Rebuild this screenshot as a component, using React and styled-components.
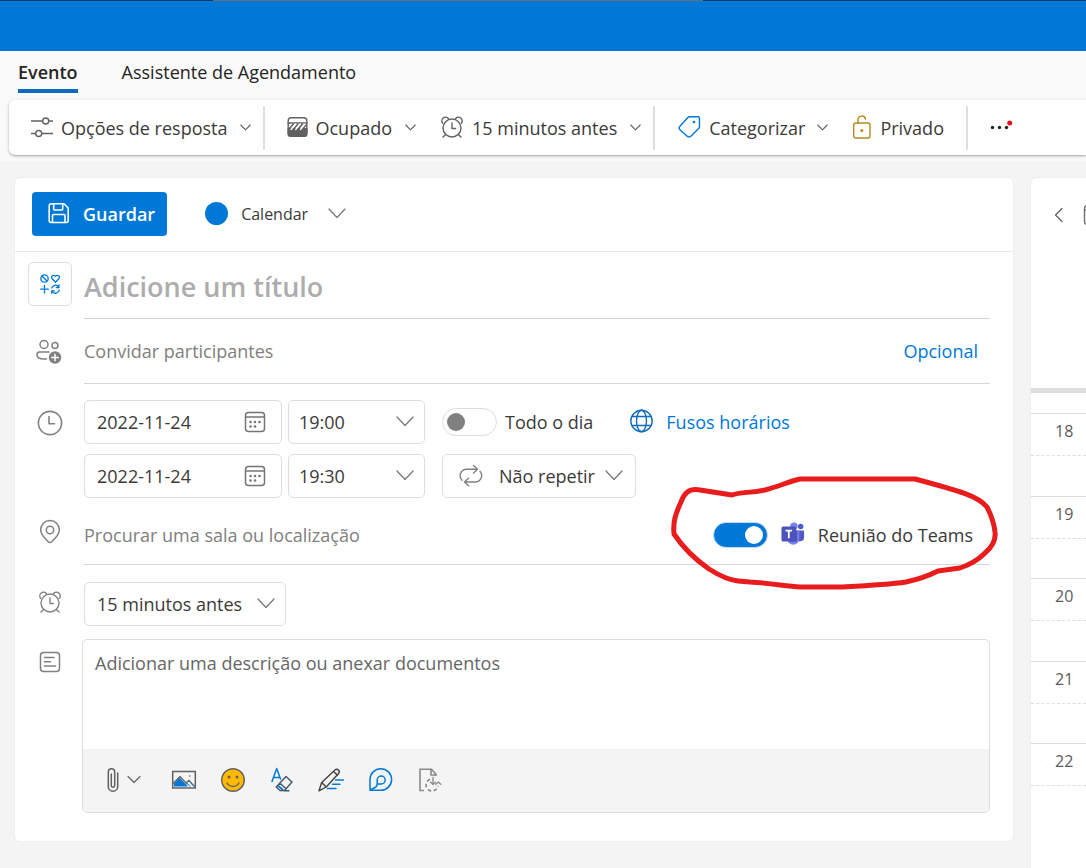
import { useState } from "react";
import styled, { createGlobalStyle } from "styled-components";

const GlobalStyle = createGlobalStyle`
  * {
    box-sizing: border-box;
  }

  body {
    margin: 0;
    background-color: #f4f4f4;
    color: #3b3a39;
    font-family: "Open Sans", "Noto Sans", sans-serif;
    font-size: 18px;
    line-height: 24px;
  }

  button,
  input,
  select,
  textarea {
    font: inherit;
    color: inherit;
    background: none;
    border: none;
    border-radius: 0;
    outline: none;
    padding: 0;
    margin: 0;
  }

  button,
  select {
    cursor: pointer;
  }

  svg {
    flex: none;
  }
`;

const Page = styled.div`
  height: 100vh;
  overflow: hidden;
  display: flex;
  flex-direction: column;
`;

const TopBar = styled.header`
  flex: none;
  height: 51px;
  background-color: #0078d7;
`;

const WindowEdge = styled.div`
  height: 1px;
  background: linear-gradient(to right, #0b3a66 213px, #5f6f7c 213px, #5f6f7c 703px, #0b3a66 703px);
`;

const Ribbon = styled.div`
  flex: none;
  background-color: #fafafa;
  padding: 0 0 6px 9px;
`;

const Tabs = styled.nav`
  display: flex;
  gap: 44px;
  height: 49px;
  padding: 0 9px;
`;

const Tab = styled.button`
  height: 42px;
  display: flex;
  align-items: center;
  padding-top: 4px;
  color: #252423;
  font-weight: ${(props) => (props.$active ? 600 : 400)};
  border-bottom: 4px solid ${(props) => (props.$active ? "#0f6cbd" : "transparent")};
`;

const Toolbar = styled.div`
  display: flex;
  align-items: center;
  height: 55px;
  background-color: #fff;
  border-radius: 6px 0 0 6px;
  box-shadow: 0 1px 2px rgba(0, 0, 0, 0.28), 0 1px 5px rgba(0, 0, 0, 0.1);
`;

const ToolGroup = styled.div`
  display: flex;
  align-items: center;
  gap: 24px;
  height: 44px;
  padding: 0 ${(props) => (props.$wide ? "22px" : "12px")} 0 22px;
  border-right: ${(props) => (props.$last ? "none" : "2px solid #e1dfdd")};
`;

const ToolButton = styled.button`
  display: flex;
  align-items: center;
  gap: 8px;
  white-space: nowrap;

  > svg + svg {
    margin-left: 4px;
  }
`;

const ToolLabel = styled.label`
  display: flex;
  align-items: center;
  gap: 8px;
`;

// the chevron shares the grid cell of the select it belongs to
const SelectShell = styled.span`
  display: grid;
  align-items: center;
  height: ${(props) => (props.$boxed ? "44px" : "auto")};
  width: ${(props) => props.$width || "auto"};
  border: ${(props) => (props.$boxed ? "1px solid #dedede" : "none")};
  border-radius: 5px;

  > * {
    grid-area: 1 / 1;
  }

  > svg {
    justify-self: end;
    margin-right: ${(props) => (props.$boxed ? "10px" : "0")};
    pointer-events: none;
  }
`;

const Select = styled.select`
  appearance: none;
  width: 100%;
  height: 100%;
  field-sizing: content;
  padding: ${(props) => props.$padding || "0 24px 0 0"};
  font-size: ${(props) => props.$size || "18px"};
`;

const MoreButton = styled.button`
  display: flex;
  align-items: center;
`;

const Workspace = styled.main`
  flex: 1;
  min-height: 0;
  display: grid;
  grid-template-columns: minmax(0, 1fr) 56px;
  align-items: start;
  gap: 16px;
  padding: 16px 0 0 14px;
`;

const Card = styled.form`
  background-color: #fff;
  border: 1px solid #eeeeee;
  border-radius: 6px;
  padding-bottom: 28px;
`;

const CardHeader = styled.div`
  display: flex;
  align-items: center;
  gap: 38px;
  height: 74px;
  padding: 0 0 2px 17px;
  border-bottom: 1px solid #ebebeb;
`;

const SaveButton = styled.button`
  display: flex;
  align-items: center;
  gap: 13px;
  height: 44px;
  padding: 0 12px 0 16px;
  border-radius: 4px;
  background-color: #0078d7;
  color: #fff;
  font-weight: 600;
`;

const CalendarPicker = styled.label`
  display: flex;
  align-items: center;
  gap: 13px;
`;

const CalendarDot = styled.span`
  width: 23px;
  height: 23px;
  border-radius: 50%;
  background-color: #0078d7;
`;

const Fields = styled.div`
  padding: 0 23px 0 13px;
`;

const Row = styled.div`
  display: grid;
  grid-template-columns: 44px minmax(0, 1fr);
  column-gap: ${(props) => (props.$tight ? "10px" : "12px")};
  padding-top: ${(props) => props.$top || "0"};
`;

const IconCell = styled.label`
  display: flex;
  align-items: center;
  justify-content: center;
  height: ${(props) => props.$height || "auto"};
`;

const CharmButton = styled.button`
  display: flex;
  align-items: center;
  justify-content: center;
  width: 44px;
  height: 44px;
  margin-top: 10px;
  border: 1px solid #dedede;
  border-radius: 5px;
`;

const Underlined = styled.div`
  position: relative;
  display: flex;
  align-items: center;
  height: ${(props) => props.$height};
  padding-top: ${(props) => props.$top || "0"};
  border-bottom: 1px solid #d6d6d6;
`;

const TextInput = styled.input`
  flex: 1;
  min-width: 0;
  height: 100%;

  &::placeholder {
    color: #808080;
    opacity: 1;
  }
`;

const TitleInput = styled(TextInput)`
  font-size: 27px;
  font-weight: 600;

  &::placeholder {
    color: #adadad;
  }
`;

const LinkButton = styled.button`
  display: flex;
  align-items: center;
  gap: 13px;
  color: #0078d7;
  margin-right: ${(props) => (props.$end ? "12px" : "0")};
`;

const When = styled.div`
  display: flex;
  flex-direction: column;
  gap: 10px;
`;

const WhenLine = styled.div`
  display: flex;
  align-items: center;
  gap: 6px;
`;

const DateBox = styled.label`
  display: flex;
  align-items: center;
  width: 198px;
  height: 44px;
  padding: 0 15px 0 12px;
  border: 1px solid #dedede;
  border-radius: 5px;
`;

const WhenExtra = styled.div`
  display: flex;
  align-items: center;
  gap: 37px;
  padding-left: 11px;
`;

const ToggleLabel = styled.label`
  display: flex;
  align-items: center;
  gap: ${(props) => props.$gap || "8px"};
  white-space: nowrap;
`;

const Toggle = styled.input`
  appearance: none;
  flex: none;
  display: flex;
  align-items: center;
  width: 55px;
  height: 28px;
  padding: 0 4px;
  border: 1px solid #dedede;
  border-radius: 14px;
  cursor: pointer;

  &::before {
    content: "";
    width: 18px;
    height: 18px;
    border-radius: 50%;
    background-color: #808080;
  }

  &:checked {
    height: 26px;
    justify-content: flex-end;
    border-color: #c8ddef;
    background-color: #0078d7;
  }

  &:checked::before {
    background-color: #fff;
  }
`;

const RepeatBox = styled.label`
  display: flex;
  align-items: center;
  gap: 16px;
  width: 194px;
  height: 44px;
  padding-left: 16px;
  border: 1px solid #dedede;
  border-radius: 5px;
`;

const TeamsSlot = styled.div`
  position: relative;
  padding-right: 17px;
`;

// hand drawn ring that lies over the Teams switch
const Ring = styled.svg`
  position: absolute;
  top: -52px;
  right: -20px;
  pointer-events: none;
`;

const Editor = styled.div`
  border: 1px solid #dedede;
  border-radius: 5px;
  overflow: hidden;
`;

const Description = styled.textarea`
  display: block;
  width: 100%;
  height: 109px;
  padding: 11px 12px;
  resize: none;

  &::placeholder {
    color: #666666;
    opacity: 1;
  }
`;

const EditorTools = styled.div`
  display: flex;
  align-items: center;
  gap: 23px;
  height: 63px;
  padding: 0 23px 2px;
  background-color: #f4f4f4;
`;

const EditorButton = styled.button`
  display: flex;
  align-items: center;
  gap: 7px;
  margin-right: ${(props) => (props.$wide ? "7px" : "0")};
`;

const DayPanel = styled.aside`
  height: 720px;
  background-color: #fff;
  border: 1px solid #eeeeee;
  border-right: none;
  border-radius: 6px 0 0 0;
  overflow: hidden;
`;

const DayHeader = styled.div`
  display: flex;
  align-items: center;
  gap: 18px;
  height: 73px;
  padding-left: 23px;
`;

const AllDayStrip = styled.div`
  height: 142px;
  border-bottom: 5px solid #dedede;
  margin-bottom: 20px;
`;

const Hour = styled.div`
  height: 83px;
  border-top: 1px solid #dedede;
  font-size: 16px;
  color: #5c5c5c;

  &:nth-child(even) {
    height: 82px;
  }
`;

const HourLabel = styled.div`
  height: 42px;
  padding: 5px 0 0 24px;
  border-bottom: 1px dashed #dedede;
`;

const Icon = ({ width = 24, height = 24, color = "#616161", stroke = 1.4, children }) => (
    <svg
        width={width}
        height={height}
        viewBox={`0 0 ${width} ${height}`}
        fill="none"
        stroke={color}
        strokeWidth={stroke}
        strokeLinecap="round"
        strokeLinejoin="round"
        aria-hidden="true"
    >
        {children}
    </svg>
);

const Chevron = ({ small }) =>
    small ? (
        <Icon width={11} height={12} stroke={1.1}>
            <path d="M.8 3l4.7 4.8L10.2 3" />
        </Icon>
    ) : (
        <Icon width={18} height={14} stroke={1.2} color="#757575">
            <path d="M1 2l8 8.5L17 2" />
        </Icon>
    );

const SlidersIcon = () => (
    <Icon height={28} width={22}>
        <path d="M0 7h11.5M18 7h4M0 19.500h4.500M11 19.500h11" />
        <circle cx="14.700" cy="7" r="3" />
        <circle cx="7.700" cy="19.500" r="3" />
    </Icon>
);

const BusyIcon = () => (
    <Icon width={21} height={26}>
        <path d="M.5 13h20v6a3 3 0 0 1-3 3h-14a3 3 0 0 1-3-3z" fill="#616161" stroke="none" />
        <rect x="1.200" y="2.700" width="18.600" height="18.600" rx="3" />
        <path d="M1 8h19" />
        <path d="M2 14L6.500 9M6.500 14L11 9M11 14l4.500-5M15.500 14L19.500 9.500" stroke="#616161" strokeWidth="1.800" strokeLinecap="butt" />
        <path d="M4 14.500L8.700 9M8.700 14.500L13.200 9M13.500 14.500L18 9" stroke="#fff" strokeWidth="1.300" />
    </Icon>
);

const AlarmIcon = ({ color = "#616161", height = 24 }) => (
    <Icon width={24} height={height} color={color}>
        <circle cx="12" cy="13" r="9" />
        <path d="M12 8v5.500h3.500M5.700 19.500L3 22M18.300 19.500L21 22" />
        <path d="M2.600 8.300A3.700 3.700 0 1 1 8.500 3.700M21.400 8.300A3.700 3.700 0 1 0 15.500 3.700" />
    </Icon>
);

const TagIcon = () => (
    <Icon width={24} height={26} color="#0078d7">
        <path d="M13 1.700h8a1.500 1.500 0 0 1 1.500 1.500v8.300a3 3 0 0 1-.9 2.100l-7.400 7.500a3 3 0 0 1-4.300 0l-7.200-6.700a2 2 0 0 1 0-2.900l8.200-9a3 3 0 0 1 2.100-.8z" />
        <circle cx="17" cy="7" r="1.300" fill="#0078d7" stroke="none" />
    </Icon>
);

const UnlockIcon = () => (
    <Icon width={20} height={26} color="#b58a1b">
        <rect x="1.700" y="8" width="16.300" height="15" rx="2" />
        <path d="M6 8V5a3.800 3.800 0 0 1 7.500-1" />
        <circle cx="9.800" cy="15.500" r="1.500" fill="#b58a1b" stroke="none" />
    </Icon>
);

const MoreIcon = () => (
    <Icon width={24} height={26} stroke={0}>
        <g fill="#252423">
            <circle cx="2.500" cy="12.500" r="1.700" />
            <circle cx="9.500" cy="12.500" r="1.700" />
            <circle cx="16.500" cy="12.500" r="1.700" />
        </g>
        <circle cx="19.700" cy="8" r="2.500" fill="#e81123" />
    </Icon>
);

const SaveIcon = () => (
    <Icon width={22} height={24} color="#fff" stroke={1.6}>
        <path d="M4 1.800h12L20.200 6v12.500a2 2 0 0 1-2 2H3.200a2 2 0 0 1-2-2V3.800a2 2 0 0 1 2-2z" />
        <path d="M5.700 2v5a1 1 0 0 0 1 1h7a1 1 0 0 0 1-1V2M4.500 20v-6.500a1 1 0 0 1 1-1h10.500a1 1 0 0 1 1 1V20" />
    </Icon>
);

const CharmIcon = () => (
    <Icon width={20} height={20} color="#0078d7" stroke={1.3}>
        <circle cx="4.500" cy="4.500" r="3.700" />
        <path d="M2 2l5 5" />
        <path d="M15.500 8.200L12.200 4.700a2 2 0 0 1 0-2.800 2 2 0 0 1 2.900 0l.4.4.4-.4a2 2 0 0 1 2.900 0 2 2 0 0 1 0 2.800z" />
        <path d="M4.500 11.500v7.500M.7 15.200h7.600" />
        <path d="M11.700 14a4 4 0 0 1 7-1.200M19 11v2.500h-2.600M19.300 16.200a4 4 0 0 1-7 1.500M11.700 19.300v-2.500h2.600" />
    </Icon>
);

const PeopleIcon = () => (
    <Icon width={28} height={26} color="#808080" stroke={1.5}>
        <circle cx="8" cy="5.500" r="4" />
        <circle cx="19" cy="6.500" r="3" />
        <path d="M13 13H3.500A2.500 2.500 0 0 0 1 15.500c0 3 3 4.500 7 4.500h2.500" />
        <circle cx="19" cy="18.500" r="6.200" fill="#808080" stroke="none" />
        <path d="M19 15.200v6.600M15.700 18.500h6.600" stroke="#fff" />
    </Icon>
);

const ClockIcon = () => (
    <Icon width={26} height={26} color="#808080" stroke={1.6}>
        <circle cx="13" cy="13" r="11.600" />
        <path d="M12 6.500v7.300h5.500" />
    </Icon>
);

const CalendarIcon = () => (
    <Icon width={22} height={22} color="#757575" stroke={1.5}>
        <rect x="1.500" y="1.500" width="19" height="19" rx="3" />
        <path d="M2 6h18" />
        <g fill="#757575" stroke="none">
            <circle cx="6.500" cy="11" r="1.300" />
            <circle cx="11" cy="11" r="1.300" />
            <circle cx="15.500" cy="11" r="1.300" />
            <circle cx="6.500" cy="15.500" r="1.300" />
            <circle cx="11" cy="15.500" r="1.300" />
        </g>
    </Icon>
);

const PinIcon = () => (
    <Icon width={24} height={26} color="#808080" stroke={1.5}>
        <path d="M12 23.500c-.7 0-1.300-.3-1.800-.8-3.300-3.200-7.600-7-7.600-12A9.400 9.400 0 0 1 12 1.500a9.400 9.400 0 0 1 9.400 9.200c0 5-4.300 8.800-7.600 12-.5.5-1.100.8-1.800.8z" />
        <circle cx="12" cy="11" r="3.700" />
    </Icon>
);

const NotesIcon = () => (
    <Icon width={22} height={22} color="#808080" stroke={1.5}>
        <rect x="1.500" y="1.500" width="19" height="19" rx="3" />
        <path d="M5.500 6.500h9.500M5.500 10.800h6M5.500 15h11" />
    </Icon>
);

const GlobeIcon = () => (
    <Icon width={23} height={26} color="#0f6cbd" stroke={1.4}>
        <circle cx="11.500" cy="12" r="10.700" />
        <ellipse cx="11.500" cy="12" rx="5" ry="10.700" />
        <path d="M2 7.500h19M2 16.500h19" />
    </Icon>
);

const RepeatIcon = () => (
    <Icon width={24} height={24} color="#808080" stroke={1.4}>
        <path d="M14.500 1.500l4 3.700-4 3.700M18 5.200H7.500a6.500 6.500 0 0 0-4.500 11M9.500 14.300l-4 3.700 4 3.700M6 18h10.500A6.500 6.500 0 0 0 21 7.200" />
    </Icon>
);

const TeamsIcon = () => (
    <Icon width={24} height={26} stroke={0}>
        <circle cx="19.700" cy="4.500" r="2.700" fill="#5059c9" />
        <path d="M15.500 8.500h6.600c.6 0 1 .4 1 1v5.700a4 4 0 0 1-4 4h-3.600z" fill="#5059c9" />
        <circle cx="13" cy="4.200" r="3.700" fill="#7b83eb" />
        <path d="M7 8.500h10.300c.6 0 1 .4 1 1v7.300a6 6 0 0 1-12 0V9.200z" fill="#7b83eb" />
        <path d="M7 8.500h9.300v9.200a2 2 0 0 1-2 2H7.200z" fill="#3d3f9e" opacity=".65" />
        <rect x="0.500" y="4.500" width="14.500" height="15" rx="1.500" fill="#4b53bc" />
        <path d="M4.500 8.600h6.600M7.800 8.600v7.600" stroke="#fff" strokeWidth="1.800" strokeLinecap="butt" />
    </Icon>
);

const ClipIcon = () => (
    <Icon width={14} height={26} stroke={1.5}>
        <path d="M11.700 6v13.500a4.700 4.700 0 0 1-9.400 0V5a3.200 3.200 0 0 1 6.400 0v13.500a1.700 1.700 0 0 1-3.400 0V7" />
    </Icon>
);

const PictureIcon = () => (
    <Icon width={26} height={24} stroke={1.5}>
        <path d="M3 18.500v-3l5.500-6 8.500 9z" fill="#0078d7" stroke="none" />
        <path d="M2.500 15L9 8.500l7 7.500M15 15l3-2.700 5.500 6" strokeWidth="1.200" />
        <path d="M16.500 15.500l2.500 3M19 14l3.500 4" stroke="#0078d7" strokeWidth="1" />
        <rect x="1.700" y="3.500" width="22.600" height="16.500" strokeLinejoin="miter" />
        <circle cx="18.700" cy="8" r=".8" fill="#616161" stroke="none" />
    </Icon>
);

const SmileyIcon = () => (
    <Icon width={26} height={26} stroke={1.4}>
        <circle cx="13" cy="13" r="11.300" fill="#ffb900" />
        <circle cx="9" cy="10" r="1.500" fill="#616161" stroke="none" />
        <circle cx="17" cy="10" r="1.500" fill="#616161" stroke="none" />
        <path d="M7 16c2.800 4.600 9.200 4.600 12 0" />
    </Icon>
);

const ClearFormatIcon = () => (
    <Icon width={26} height={26} color="#44546a" stroke={1.4}>
        <path d="M3 14.500L7.700 1.500 11.500 12M4.700 10.500h6" stroke="#0078d7" strokeWidth="1.500" />
        <path d="M17 9.500l6 5.500-7.500 8.500H11L7.200 20zM10.800 16l6.200 5.700M15 23.700h5" />
        <path d="M9.700 19.300l3.800 3.200" stroke="#0078d7" strokeWidth="1.800" />
    </Icon>
);

const PenIcon = () => (
    <Icon width={26} height={26} color="#404040" stroke={1.4}>
        <path d="M17.500 13h8M14.500 17.300h7.500M9.500 21.500h8.500" stroke="#0078d7" />
        <path d="M1 23.800l2.700-8.300L17.200 2.800c2-1.700 5.300 1.200 3.600 3.500L8.200 20zM3.700 15.500l4.500 4.500M15.500 4.500l4 3.800" fill="#f4f4f4" />
    </Icon>
);

const LoopIcon = () => (
    <Icon width={26} height={26} color="#0078d7" stroke={1.5}>
        <path d="M3 23.300V12.500a10.800 10.800 0 1 1 10.800 10.800z" />
        <path d="M3.500 23l5.300-3c1.300-.8 1.400-2 1.400-3.500v-3.500a4 4 0 1 1 4 4h-3.500" />
    </Icon>
);

const DocumentIcon = () => (
    <Icon width={26} height={26} color="#8a8a8a" stroke={1.6}>
        <path d="M8 23.500H4V2.200h11.500l4.500 5V9M15 2.500V8h5" strokeLinejoin="miter" strokeLinecap="butt" />
        <path d="M14 12.300a6 6 0 1 0 8 6.500" strokeDasharray="3.500 2.500" strokeLinecap="butt" />
        <path d="M17 10.500v7M14.700 15.300l2.300 2.300 2.300-2.300M19.800 17.300l2.500-2.300 2.500 2.300" strokeWidth="1.300" />
    </Icon>
);

const BackIcon = () => (
    <Icon width={11} height={16} stroke={1.3}>
        <path d="M8 1.500L1.500 8 8 14.500" />
    </Icon>
);

const hours = [18, 19, 20, 21, 22];

const App = () => {
    const [allDay, setAllDay] = useState(false);
    const [teams, setTeams] = useState(true);
    const [start, setStart] = useState("2022-11-24");
    const [end, setEnd] = useState("2022-11-24");

    return (
        <Page>
            <GlobalStyle />
            <TopBar>
                <WindowEdge />
            </TopBar>

            <Ribbon>
                <Tabs>
                    <Tab type="button" $active>Evento</Tab>
                    <Tab type="button">Assistente de Agendamento</Tab>
                </Tabs>
                <Toolbar>
                    <ToolGroup>
                        <ToolButton type="button">
                            <SlidersIcon />
                            Opções de resposta
                            <Chevron small />
                        </ToolButton>
                    </ToolGroup>
                    <ToolGroup>
                        <ToolLabel>
                            <BusyIcon />
                            <SelectShell>
                                <Select aria-label="Ocupado">
                                    <option>Ocupado</option>
                                </Select>
                                <Chevron small />
                            </SelectShell>
                        </ToolLabel>
                        <ToolLabel>
                            <AlarmIcon height={26} />
                            <SelectShell>
                                <Select aria-label="15 minutos antes">
                                    <option>15 minutos antes</option>
                                </Select>
                                <Chevron small />
                            </SelectShell>
                        </ToolLabel>
                    </ToolGroup>
                    <ToolGroup $wide>
                        <ToolButton type="button">
                            <TagIcon />
                            Categorizar
                            <Chevron small />
                        </ToolButton>
                        <ToolButton type="button">
                            <UnlockIcon />
                            Privado
                        </ToolButton>
                    </ToolGroup>
                    <ToolGroup $last>
                        <MoreButton type="button" aria-label="Mais">
                            <MoreIcon />
                        </MoreButton>
                    </ToolGroup>
                </Toolbar>
            </Ribbon>

            <Workspace>
                <Card onSubmit={(e) => e.preventDefault()}>
                    <CardHeader>
                        <SaveButton type="submit">
                            <SaveIcon />
                            Guardar
                        </SaveButton>
                        <CalendarPicker>
                            <CalendarDot />
                            <SelectShell>
                                <Select $size="16px" $padding="0 38px 0 0" aria-label="Calendar">
                                    <option>Calendar</option>
                                </Select>
                                <Chevron />
                            </SelectShell>
                        </CalendarPicker>
                    </CardHeader>

                    <Fields>
                        <Row>
                            <CharmButton type="button" aria-label="Símbolo">
                                <CharmIcon />
                            </CharmButton>
                            <Underlined $height="67px" $top="2px">
                                <TitleInput id="title" aria-label="Título" placeholder="Adicione um título" />
                            </Underlined>
                        </Row>

                        <Row>
                            <IconCell htmlFor="people">
                                <PeopleIcon />
                            </IconCell>
                            <Underlined $height="65px">
                                <TextInput id="people" placeholder="Convidar participantes" />
                                <LinkButton type="button" $end>Opcional</LinkButton>
                            </Underlined>
                        </Row>

                        <Row $top="16px">
                            <IconCell htmlFor="start" $height="46px">
                                <ClockIcon />
                            </IconCell>
                            <When>
                                <WhenLine>
                                    <DateBox>
                                        <TextInput id="start" value={start} onChange={(e) => setStart(e.target.value)} />
                                        <CalendarIcon />
                                    </DateBox>
                                    <SelectShell $boxed $width="137px">
                                        <Select $padding="0 10px" aria-label="Início">
                                            <option>19:00</option>
                                        </Select>
                                        <Chevron />
                                    </SelectShell>
                                    <WhenExtra>
                                        <ToggleLabel>
                                            <Toggle
                                                type="checkbox"
                                                role="switch"
                                                checked={allDay}
                                                onChange={() => setAllDay(!allDay)}
                                            />
                                            Todo o dia
                                        </ToggleLabel>
                                        <LinkButton type="button">
                                            <GlobeIcon />
                                            Fusos horários
                                        </LinkButton>
                                    </WhenExtra>
                                </WhenLine>
                                <WhenLine>
                                    <DateBox>
                                        <TextInput value={end} aria-label="Fim" onChange={(e) => setEnd(e.target.value)} />
                                        <CalendarIcon />
                                    </DateBox>
                                    <SelectShell $boxed $width="137px">
                                        <Select $padding="0 10px" aria-label="Fim">
                                            <option>19:30</option>
                                        </Select>
                                        <Chevron />
                                    </SelectShell>
                                    <WhenExtra>
                                        <RepeatBox>
                                            <RepeatIcon />
                                            <SelectShell>
                                                <Select $padding="0 28px 0 0" aria-label="Não repetir">
                                                    <option>Não repetir</option>
                                                </Select>
                                                <Chevron />
                                            </SelectShell>
                                        </RepeatBox>
                                    </WhenExtra>
                                </WhenLine>
                            </When>
                        </Row>

                        <Row>
                            <IconCell htmlFor="place">
                                <PinIcon />
                            </IconCell>
                            <Underlined $height="67px" $top="8px">
                                <TextInput id="place" placeholder="Procurar uma sala ou localização" />
                                <TeamsSlot>
                                    <ToggleLabel $gap="13px">
                                        <Toggle
                                            type="checkbox"
                                            role="switch"
                                            checked={teams}
                                            onChange={() => setTeams(!teams)}
                                        />
                                        <TeamsIcon />
                                        Reunião do Teams
                                    </ToggleLabel>
                                    <Ring width="350" height="130" viewBox="0 0 350 130" fill="none" stroke="#e81c1c" strokeWidth="5" strokeLinejoin="round" strokeLinecap="round">
                                        <path d="M72 25L40 20C28 18 24 24 21 32C15 45 13 52 14 64C22 76 36 90 49 99C60 106 68 110 78 111L90 112C110 113 125 116 140 117L180 117C200 116 225 115 246 112C260 109 268 106 278 101L300 98C312 94 318 90 325 83C332 77 336 70 335 62C334 52 331 45 327 37C318 26 300 21 255 9L140 9C130 11 120 16 105 20C90 23 80 22 72 25" />
                                    </Ring>
                                </TeamsSlot>
                            </Underlined>
                        </Row>

                        <Row $top="17px">
                            <IconCell htmlFor="reminder" $height="40px">
                                <AlarmIcon color="#808080" />
                            </IconCell>
                            <SelectShell $boxed $width="202px">
                                <Select id="reminder" $padding="0 12px">
                                    <option>15 minutos antes</option>
                                </Select>
                                <Chevron />
                            </SelectShell>
                        </Row>

                        <Row $top="13px" $tight>
                            <IconCell htmlFor="description" $height="46px">
                                <NotesIcon />
                            </IconCell>
                            <Editor>
                                <Description id="description" placeholder="Adicionar uma descrição ou anexar documentos" />
                                <EditorTools>
                                    <EditorButton type="button" aria-label="Anexar" $wide>
                                        <ClipIcon />
                                        <Icon width={14} height={12} stroke={1.2}>
                                            <path d="M1 2.500l6 6 6-6" />
                                        </Icon>
                                    </EditorButton>
                                    <EditorButton type="button" aria-label="Imagem">
                                        <PictureIcon />
                                    </EditorButton>
                                    <EditorButton type="button" aria-label="Emoji">
                                        <SmileyIcon />
                                    </EditorButton>
                                    <EditorButton type="button" aria-label="Limpar formatação">
                                        <ClearFormatIcon />
                                    </EditorButton>
                                    <EditorButton type="button" aria-label="Formatar">
                                        <PenIcon />
                                    </EditorButton>
                                    <EditorButton type="button" aria-label="Loop">
                                        <LoopIcon />
                                    </EditorButton>
                                    <EditorButton type="button" aria-label="Modelo">
                                        <DocumentIcon />
                                    </EditorButton>
                                </EditorTools>
                            </Editor>
                        </Row>
                    </Fields>
                </Card>

                <DayPanel>
                    <DayHeader>
                        <BackIcon />
                        <CalendarIcon />
                    </DayHeader>
                    <AllDayStrip />
                    <div>
                        {hours.map((hour) => (
                            <Hour key={hour}>
                                <HourLabel>{hour}</HourLabel>
                            </Hour>
                        ))}
                    </div>
                </DayPanel>
            </Workspace>
        </Page>
    );
};

export default App;
